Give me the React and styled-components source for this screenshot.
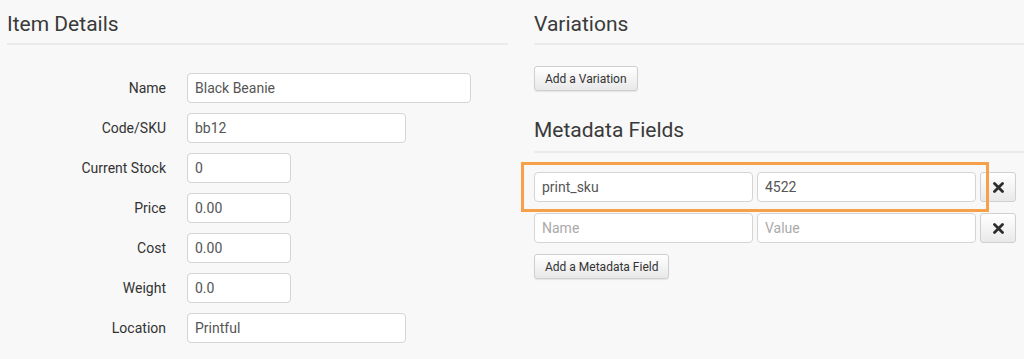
import React from 'react';
import styled, { createGlobalStyle } from 'styled-components';

const GlobalStyle = createGlobalStyle`
  html, body {
    margin: 0;
    padding: 0;
    background: #f8f8f8;
    overflow: hidden;
  }
  body {
    font-family: Roboto, "Liberation Sans", sans-serif;
    color: #333;
  }
`

const Page = styled.div`
  display: flex;
  gap: 26px;
  padding: 0 0 0 7px;
  width: 1024px;
  height: 359px;
  box-sizing: border-box;
`

const Column = styled.div`
  width: ${props => props.width}px;
  flex-shrink: 0;
  position: relative;
`

const Heading = styled.h2`
  margin: 0;
  padding: ${props => props.top || 12}px 0 ${props => props.bottom || 7}px;
  font-size: 21px;
  font-weight: 400;
  line-height: 24px;
  color: #3a3a3a;
  border-bottom: 2px solid #ebebeb;
`

const Form = styled.div`
  display: flex;
  flex-direction: column;
  gap: 10px;
  padding-top: 28px;
`

const Row = styled.div`
  display: flex;
  align-items: center;
`

const Label = styled.label`
  width: 159px;
  margin-right: 21px;
  text-align: right;
  font-size: 14px;
  color: #333;
`

const Input = styled.input`
  box-sizing: border-box;
  width: ${props => props.width}px;
  height: 30px;
  padding: 0 7px;
  border: 1px solid #d4d4d4;
  border-radius: 4px;
  background: #fff;
  font-family: Roboto, "Liberation Sans", sans-serif;
  font-size: 14px;
  color: #555;
  outline: none;

  &::placeholder {
    color: #aaa;
  }
`

const Button = styled.button`
  box-sizing: border-box;
  height: 25px;
  padding: 0 10px;
  border: 1px solid #cfcfcf;
  border-radius: 3px;
  background: linear-gradient(#ffffff, #e8e8e8);
  box-shadow: 0 1px 1px rgba(0, 0, 0, 0.08);
  font-family: Roboto, "Liberation Sans", sans-serif;
  font-size: 12px;
  color: #333;
  cursor: pointer;
`

const ButtonArea = styled.div`
  padding-top: ${props => props.top}px;
`

const MetaList = styled.div`
  display: flex;
  flex-direction: column;
  gap: 11px;
  padding-top: 19px;
`

const MetaRow = styled.div`
  display: flex;
  gap: 4px;
`

const RemoveButton = styled.button`
  box-sizing: border-box;
  width: 36px;
  height: 30px;
  border: 1px solid #d0d0d0;
  border-radius: 3px;
  background: linear-gradient(#ffffff, #e9e9e9);
  display: flex;
  align-items: center;
  justify-content: center;
  padding: 0;
  cursor: pointer;
`

const Highlight = styled.div`
  position: absolute;
  left: -13px;
  top: 162px;
  width: 468px;
  height: 50px;
  box-sizing: border-box;
  border: 3px solid #f6a04a;
  pointer-events: none;
`

const CloseIcon = () => (
  <svg width="11" height="11" viewBox="0 0 11 11">
    <path d="M1.5 1.5 L9.5 9.5 M9.5 1.5 L1.5 9.5" stroke="#2e2e2e" strokeWidth="2.8" strokeLinecap="round" />
  </svg>
)

const fields = [
  { label: 'Name', value: 'Black Beanie', width: 284 },
  { label: 'Code/SKU', value: 'bb12', width: 219 },
  { label: 'Current Stock', value: '0', width: 104 },
  { label: 'Price', value: '0.00', width: 104 },
  { label: 'Cost', value: '0.00', width: 104 },
  { label: 'Weight', value: '0.0', width: 104 },
  { label: 'Location', value: 'Printful', width: 219 },
]

const metadata = [
  { name: 'print_sku', value: '4522' },
  { name: '', value: '' },
]

export default function App() {
  return (
    <>
      <GlobalStyle />
      <Page>
        <Column width={501}>
          <Heading>Item Details</Heading>
          <Form>
            {fields.map(f => (
              <Row key={f.label}>
                <Label>{f.label}</Label>
                <Input width={f.width} defaultValue={f.value} />
              </Row>
            ))}
          </Form>
        </Column>
        <Column width={490}>
          <Heading>Variations</Heading>
          <ButtonArea top={21}>
            <Button>Add a Variation</Button>
          </ButtonArea>
          <Heading top={27} bottom={9}>Metadata Fields</Heading>
          <MetaList>
            {metadata.map((m, i) => (
              <MetaRow key={i}>
                <Input width={219} defaultValue={m.name} placeholder="Name" />
                <Input width={219} defaultValue={m.value} placeholder="Value" />
                <RemoveButton>
                  <CloseIcon />
                </RemoveButton>
              </MetaRow>
            ))}
          </MetaList>
          <ButtonArea top={11}>
            <Button>Add a Metadata Field</Button>
          </ButtonArea>
          <Highlight />
        </Column>
      </Page>
    </>
  )
}
